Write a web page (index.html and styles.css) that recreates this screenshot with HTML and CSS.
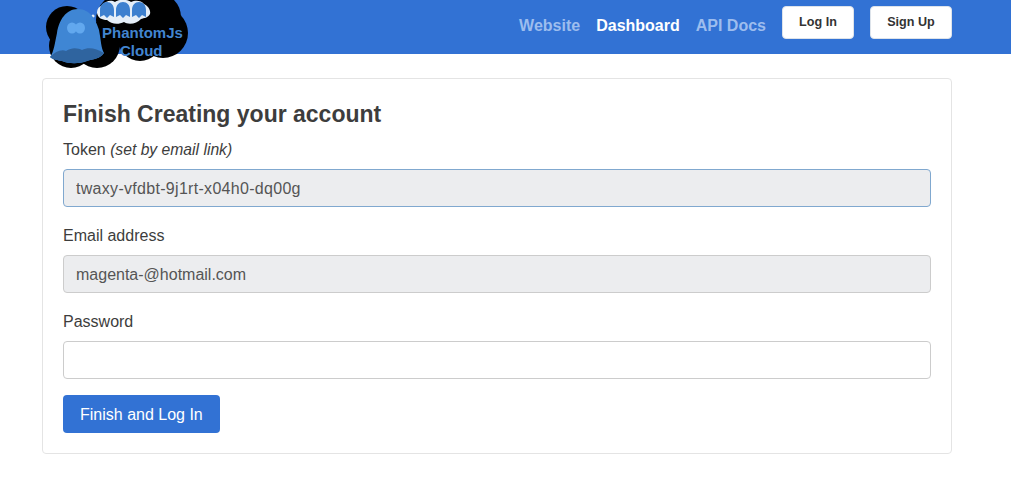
FILE: index.html
```html
<!DOCTYPE html>
<html lang="en">
<head>
    <meta charset="UTF-8">
    <title>Finish Creating your account</title>
    <link rel="stylesheet" href="styles.css">
</head>
<body>
    <header class="navbar">
        <div class="navbar-inner">
            <a class="logo" href="#">
                <svg width="150" height="70" viewBox="0 0 150 70">
                    <!-- black cloud -->
                    <g fill="#000">
                        <circle cx="23" cy="27" r="21"/>
                        <circle cx="27" cy="46" r="22"/>
                        <circle cx="53" cy="45" r="23"/>
                        <circle cx="79" cy="20" r="27"/>
                        <circle cx="113" cy="17" r="24"/>
                        <circle cx="119" cy="33" r="25"/>
                        <circle cx="96" cy="39" r="22"/>
                    </g>
                    <!-- thought cloud -->
                    <path fill="#e4eef8" d="M53 13C53 8 56 6 59 5 62 0 68 0 71 2 75-1 83-1 87 2 91 0 97 0 100 4 104 6 107 10 106 14 104 18 100 18 97 19 93 24 84 25 80 22 74 25 67 24 63 20 58 20 54 18 53 13Z"/>
                    <circle cx="49" cy="16" r="1.6" fill="#e4eef8"/>
                    <circle cx="44" cy="17" r="1.1" fill="#e4eef8"/>
                    <g fill="#3d80cf">
                        <path d="M56 17V10C56 5 59 2 63 2S70 5 70 10V17L66 15 63 18 60 15Z"/>
                        <path d="M72 17V10C72 5 75 2 79 2S86 5 86 10V17L82 15 79 18 76 15Z"/>
                        <path d="M88 17V10C88 5 91 2 95 2S102 5 102 10V17L98 15 95 18 92 15Z"/>
                    </g>
                    <!-- big ghost -->
                    <path fill="#3f86d4" d="M6 57C10 52 11 42 13 33 15 20 22 9 34 9 46 9 52 20 55 30 57 40 57 48 60 53 56 59 49 59 43 61 35 64 25 64 18 61 14 60 9 60 6 57Z"/>
                    <path fill="#2f649f" d="M6 57C11 52 17 49 22 51 28 47 34 48 38 50 44 47 52 48 60 53 56 59 49 59 43 61 35 64 25 64 18 61 14 60 9 60 6 57Z"/>
                    <ellipse cx="28" cy="28" rx="5" ry="5.5" fill="#62a8ee"/>
                    <ellipse cx="36" cy="28" rx="5" ry="5.5" fill="#62a8ee"/>
                    <text class="logo-text" x="58" y="38">PhantomJs</text>
                    <text class="logo-text" x="76" y="56">Cloud</text>
                </svg>
            </a>
            <nav class="nav-links">
                <a class="nav-link" href="#">Website</a>
                <a class="nav-link active" href="#">Dashboard</a>
                <a class="nav-link" href="#">API Docs</a>
            </nav>
            <a class="btn-nav" href="#">Log In</a>
            <a class="btn-nav" href="#">Sign Up</a>
        </div>
    </header>

    <main class="card">
        <h1>Finish Creating your account</h1>
        <form>
            <div class="form-group">
                <label for="token">Token <em>(set by email link)</em></label>
                <input class="focused" type="text" id="token" value="twaxy-vfdbt-9j1rt-x04h0-dq00g" readonly>
            </div>
            <div class="form-group">
                <label for="email">Email address</label>
                <input type="email" id="email" value="magenta-@hotmail.com" readonly>
            </div>
            <div class="form-group">
                <label for="password">Password</label>
                <input type="password" id="password">
            </div>
            <button type="submit">Finish and Log In</button>
        </form>
    </main>
</body>
</html>
```

FILE: styles.css
```css
body {
    font-family: "Liberation Sans", Arial, sans-serif;
    font-size: 16px;
    color: #3d3d3d;
    background-color: #fff;
    margin: 0;
}
.navbar {
    background-color: #3272d4;
    height: 54px;
}
.navbar-inner {
    width: 910px;
    height: 54px;
    margin-left: 42px;
    display: flex;
    align-items: flex-start;
    position: relative;
}
.logo {
    position: absolute;
    left: 2px;
    top: 0;
    line-height: 0;
}
.logo-text {
    font-family: "Liberation Sans", Arial, sans-serif;
    font-size: 15px;
    font-weight: bold;
    fill: #4285d0;
}
.nav-links {
    display: flex;
    gap: 16px;
    margin-left: auto;
    margin-right: 16px;
    padding-top: 14px;
}
.nav-link {
    color: #9dbdee;
    font-weight: bold;
    line-height: 24px;
    text-decoration: none;
}
.nav-link.active {
    color: #fff;
}
.btn-nav {
    display: block;
    background-color: #fff;
    color: #333;
    border: 1px solid #dde3ea;
    border-radius: 4px;
    box-sizing: border-box;
    width: 82px;
    height: 33px;
    line-height: 31px;
    margin-top: 6px;
    margin-left: 16px;
    font-size: 12.6px;
    font-weight: bold;
    text-align: center;
    text-decoration: none;
}
.nav-links + .btn-nav {
    width: 72px;
    margin-left: 0;
}
.card {
    width: 910px;
    box-sizing: border-box;
    margin: 24px 0 0 42px;
    padding: 20px;
    border: 1px solid #e4e4e4;
    border-radius: 4px;
}
h1 {
    font-size: 23px;
    font-weight: bold;
    line-height: 30px;
    margin: 0 0 8px;
}
.form-group {
    margin-bottom: 16px;
}
label {
    display: block;
    line-height: 26px;
    margin-bottom: 6px;
}
em {
    font-size: 15.7px;
}
input {
    display: block;
    width: 100%;
    height: 38px;
    padding: 7px 12px 5px;
    box-sizing: border-box;
    font-family: inherit;
    font-size: 16px;
    color: #555;
    background-color: #fff;
    border: 1px solid #cccccc;
    border-radius: 4px;
    outline: none;
}
input[readonly] {
    background-color: #ecedef;
}
input.focused {
    border-color: #80a8cf;
    letter-spacing: 0.3px;
}
button {
    display: block;
    height: 38px;
    padding: 2px 17px 0;
    font-family: inherit;
    font-size: 16px;
    color: #fff;
    background-color: #3272d4;
    border: none;
    border-radius: 4px;
    cursor: pointer;
}
```
